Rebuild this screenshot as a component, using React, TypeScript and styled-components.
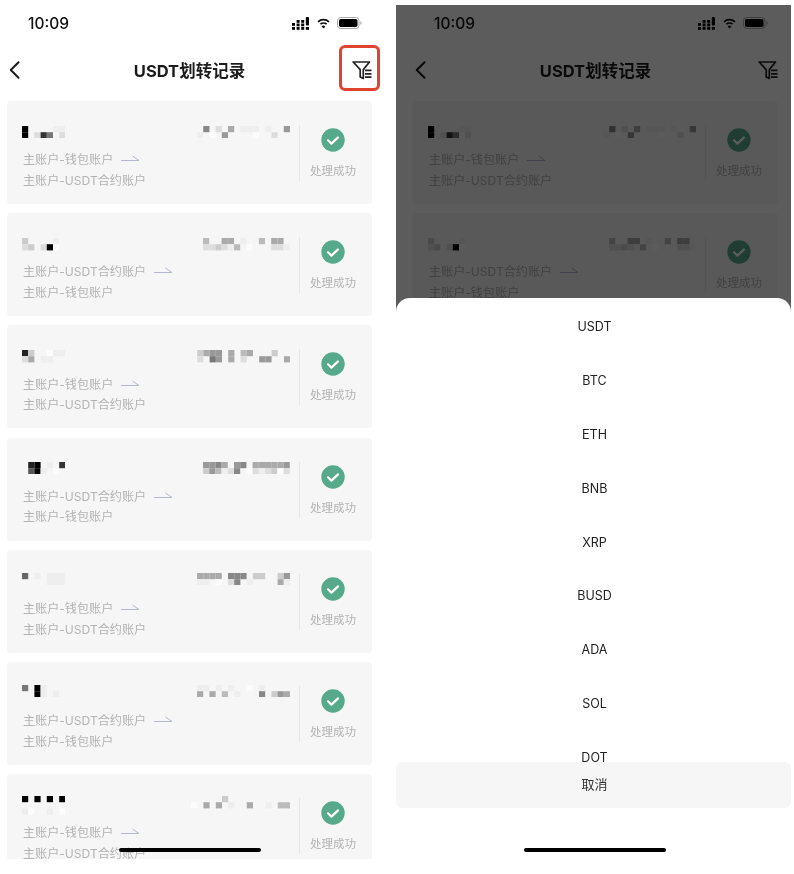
import React from "react";
import styled, { createGlobalStyle } from "styled-components";

const Global = createGlobalStyle`
  html, body { margin: 0; background: #fff; }
  #root { width: 794px; height: 874px; overflow: hidden; }
`;

const FONT = `Inter, "Noto Sans CJK SC", "Liberation Sans", sans-serif`;

const Page = styled.div`
  display: flex;
  width: 794px;
  height: 874px;
  background: #fff;
  font-family: ${FONT};
  filter: blur(0.5px);
`;

const Screen = styled.div<{ $pad: number; $top: number; $width: number }>`
  position: relative;
  box-sizing: border-box;
  flex: none;
  width: ${(p) => p.$width}px;
  height: ${(p) => 874 - p.$top}px;
  margin-top: ${(p) => p.$top}px;
  padding-left: ${(p) => p.$pad}px;
  overflow: hidden;
  background: #fff;
`;

const Column = styled.div<{ $shift: number }>`
  display: flex;
  flex-direction: column;
  width: 365px;
  margin-top: ${(p) => -p.$shift}px;
`;

const StatusBar = styled.div`
  display: flex;
  align-items: center;
  justify-content: space-between;
  box-sizing: border-box;
  height: 46px;
  padding: 0 10px 0 21px;
`;

const Time = styled.span`
  font-size: 15.5px;
  font-weight: 500;
  color: #111;
`;

const StatusIcons = styled.div`
  display: flex;
  align-items: center;
  gap: 7px;
`;

const Header = styled.div`
  position: relative;
  display: grid;
  grid-template-columns: 1fr auto 1fr;
  align-items: center;
  height: 48px;
  margin-bottom: 7px;
  padding-left: 2px;
`;

const HeaderEnd = styled.div`
  display: flex;
  justify-content: flex-end;
`;

const Title = styled.h1`
  margin: 0 0 0 -2px;
  font-size: 16.5px;
  font-weight: 700;
  color: #1b1b1b;
  white-space: nowrap;
`;

const Callout = styled.div`
  position: absolute;
  right: -8px;
  top: -1px;
  box-sizing: border-box;
  width: 41px;
  height: 46px;
  border: 3px solid #e2432f;
  border-radius: 6px;
`;

const List = styled.div`
  display: flex;
  flex-direction: column;
  gap: 9.2px;
  height: 758px;
  overflow: hidden;
`;

const Card = styled.div`
  display: flex;
  flex: none;
  height: 103px;
  background: #f6f6f6;
  border-radius: 4px;
`;

const CardMain = styled.div`
  flex: none;
  box-sizing: border-box;
  width: 292px;
  padding: 0 9px 0 16px;
`;

const MosaicRow = styled.div`
  display: flex;
  justify-content: space-between;
  align-items: flex-start;
  height: 47.5px;
  margin-left: -1px;
`;

const MosaicImage = styled.svg<{ $top: number }>`
  display: block;
  margin-top: ${(p) => p.$top}px;
`;

const Route = styled.div`
  display: flex;
  align-items: center;
  gap: 8px;
  height: 20.6px;
  font-size: 12.1px;
  color: #b3b3b3;
  white-space: nowrap;
`;

const CardStatus = styled.div`
  flex: none;
  display: flex;
  flex-direction: column;
  align-items: center;
  width: 73px;
  margin: 24px 0 23px;
  box-sizing: border-box;
  border-left: 1px solid #e6e6e6;
  padding: 3px 6px 0 0;
`;

const StatusLabel = styled.span`
  margin-top: 11px;
  font-size: 11.5px;
  line-height: 16px;
  color: #b3b3b3;
  white-space: nowrap;
`;

const Dim = styled.div`
  position: absolute;
  inset: 0;
  background: rgba(0, 0, 0, 0.64);
`;

const Sheet = styled.div`
  position: absolute;
  left: 0;
  right: 0;
  top: 293px;
  bottom: 0;
  display: flex;
  flex-direction: column;
  background: #fff;
  border-radius: 14px 14px 0 0;
`;

const CoinList = styled.div`
  box-sizing: border-box;
  height: 464px;
  padding: 2px 0 0 2px;
  overflow: hidden;
`;

const Coin = styled.div`
  display: flex;
  align-items: center;
  justify-content: center;
  height: 53.8px;
  font-size: 12.5px;
  color: #222;
`;

const Cancel = styled.div`
  display: flex;
  align-items: center;
  justify-content: center;
  box-sizing: border-box;
  height: 46px;
  padding: 0 0 4px 2px;
  background: #f6f6f6;
  border-radius: 6px;
  font-size: 13px;
  color: #333;
`;

const HomeBar = styled.div<{ $left: number; $top: number }>`
  position: absolute;
  left: ${(p) => p.$left}px;
  top: ${(p) => p.$top}px;
  width: 142px;
  height: 4px;
  border-radius: 2px;
  background: #000;
`;

const hex = (c: string) => {
  const g = Math.min(parseInt(c, 16) * 17, 252);
  return `rgb(${g},${g},${g})`;
};

const Mosaic = ({ rows, top }: { rows: string[]; top: number }) => {
  const cell = 6.2;
  const cols = Math.max(...rows.map((r) => r.length));
  return (
    <MosaicImage $top={top} width={cols * cell} height={rows.length * cell} viewBox={`0 0 ${cols * cell} ${rows.length * cell}`}>
      {rows.map((row, y) =>
        row.split("").map((c, x) =>
          c === "." ? null : (
            <rect key={`${x}-${y}`} x={x * cell} y={y * cell} width={cell} height={cell} fill={hex(c)} />
          )
        )
      )}
    </MosaicImage>
  );
};

const Arrow = () => (
  <svg width="19" height="7" viewBox="0 0 19 7" fill="none">
    <path d="M0 5.5H18L11.5 1" stroke="#b4b8cc" strokeWidth="1" />
  </svg>
);

const Check = () => (
  <svg width="24" height="24" viewBox="0 0 24 24">
    <circle cx="12" cy="12" r="11.7" fill="#56aa8b" />
    <path d="M7 12.3l3.4 3.3L17 9.4" fill="none" stroke="#fff" strokeWidth="2.2" strokeLinecap="round" strokeLinejoin="round" />
  </svg>
);

const Chevron = () => (
  <svg width="11" height="18" viewBox="0 0 11 18" fill="none">
    <path d="M9.5 1.2L1.8 9l7.7 7.8" stroke="#1b1b1b" strokeWidth="2" strokeLinecap="round" strokeLinejoin="round" />
  </svg>
);

const FilterIcon = () => (
  <svg width="20" height="19" viewBox="0 0 20 19" fill="none">
    <path d="M1.2 1h16.3L11.3 8.6v8.9L8.2 16V8.6z" stroke="#222" strokeWidth="1.7" strokeLinejoin="round" />
    <path d="M13 9.4h6.5M13 12.8h6.5M13 16.2h6.5" stroke="#222" strokeWidth="1.8" />
  </svg>
);

const Signal = () => (
  <svg width="18" height="13" viewBox="0 0 18 13">
    {[
      [0, 6],
      [0, 10],
      [4.6, 3],
      [4.6, 6.5],
      [4.6, 10],
      [9.2, 3],
      [9.2, 6.5],
      [9.2, 10],
    ].map(([x, y], i) => (
      <rect key={i} x={x} y={y} width="3" height="2.8" fill="#000" />
    ))}
    <rect x="13.8" y="0" width="3.2" height="8.4" rx="1" fill="#000" />
    <rect x="13.8" y="10" width="3.2" height="2.8" fill="#000" />
  </svg>
);

const Wifi = () => (
  <svg width="13" height="11" viewBox="0 0 13 11" fill="none">
    <path d="M1 3.8a8 8 0 0 1 11 0" stroke="#111" strokeWidth="1.7" />
    <path d="M3.4 6.2a4.6 4.6 0 0 1 6.2 0" stroke="#111" strokeWidth="1.7" />
    <path d="M6.5 10.4L4.6 8.4a2.6 2.6 0 0 1 3.8 0z" fill="#111" />
  </svg>
);

const Battery = () => (
  <svg width="25" height="12" viewBox="0 0 25 12" fill="none">
    <rect x="0.5" y="0.5" width="21.5" height="11" rx="3.2" stroke="#aaa" />
    <rect x="2" y="2" width="18.5" height="8" rx="1.8" fill="#000" />
    <path d="M23.3 4.2v3.6c.8-.3 1.4-1 1.4-1.8s-.6-1.5-1.4-1.8z" fill="#aaa" />
  </svg>
);

type TransferRecord = {
  left: string[];
  right: string[];
  top: number;
  from: string;
  to: string;
};

const WALLET = "主账户-钱包账户";
const CONTRACT = "主账户-USDT合约账户";

const records: TransferRecord[] = [
  { left: ["0....ee", "0.d37.d"], right: [".8.d.a.eee.e..9", "e.f.9....f..d.."], top: 25, from: WALLET, to: CONTRACT },
  { left: ["c....e", "dc.d0f"], right: ["b..aa.e..b.aa.", "ddcdeb.f...dde"], top: 25, from: CONTRACT, to: WALLET },
  { left: ["2c..fee", "da.ee.."], right: [".ca99.a.ba...c..", ".d.79.a.d..99..a"], top: 25, from: WALLET, to: CONTRACT },
  { left: [".20.e.3", ".50e.f."], right: ["998a.98.aaaaa9", "c9bed8.fdedcfd"], top: 24, from: CONTRACT, to: WALLET },
  { left: ["6.e.eee", "....eee"], right: ["aaaa.888.cc..c9", "ee.f.d8.e....ae"], top: 23, from: WALLET, to: CONTRACT },
  { left: ["7.0e..", "..0e.e"], right: ["ee.e.e..f.e....", "a.a.b.e...8.c9a"], top: 23, from: CONTRACT, to: WALLET },
  { left: ["0.0.0.0", ".......", "ef..e.f"], right: [".....c..........", "f.a.a.e..a..e.bb"], top: 22, from: WALLET, to: CONTRACT },
];

const coins = ["USDT", "BTC", "ETH", "BNB", "XRP", "BUSD", "ADA", "SOL", "DOT"];

const RecordCard = ({ item }: { item: TransferRecord }) => (
  <Card>
    <CardMain>
      <MosaicRow>
        <Mosaic rows={item.left} top={item.top} />
        <Mosaic rows={item.right} top={item.top} />
      </MosaicRow>
      <Route>
        {item.from}
        <Arrow />
      </Route>
      <Route>{item.to}</Route>
    </CardMain>
    <CardStatus>
      <Check />
      <StatusLabel>处理成功</StatusLabel>
    </CardStatus>
  </Card>
);

const Content = ({ shift, callout }: { shift: number; callout?: boolean }) => (
  <Column $shift={shift}>
    <StatusBar>
      <Time>10:09</Time>
      <StatusIcons>
        <Signal />
        <Wifi />
        <Battery />
      </StatusIcons>
    </StatusBar>
    <Header>
      <Chevron />
      <Title>USDT划转记录</Title>
      <HeaderEnd>
        <FilterIcon />
      </HeaderEnd>
      {callout && <Callout />}
    </Header>
    <List>
      {records.map((r, i) => (
        <RecordCard key={i} item={r} />
      ))}
    </List>
  </Column>
);

export default function App() {
  return (
    <Page>
      <Global />
      <Screen $pad={7} $top={0} $width={396}>
        <Content shift={0} callout />
        <HomeBar $left={119} $top={848} />
      </Screen>
      <Screen $pad={17} $top={5} $width={395}>
        <Content shift={5} />
        <Dim />
        <Sheet>
          <CoinList>
            {coins.map((c) => (
              <Coin key={c}>{c}</Coin>
            ))}
          </CoinList>
          <Cancel>取消</Cancel>
        </Sheet>
        <HomeBar $left={128} $top={843} />
      </Screen>
    </Page>
  );
}
